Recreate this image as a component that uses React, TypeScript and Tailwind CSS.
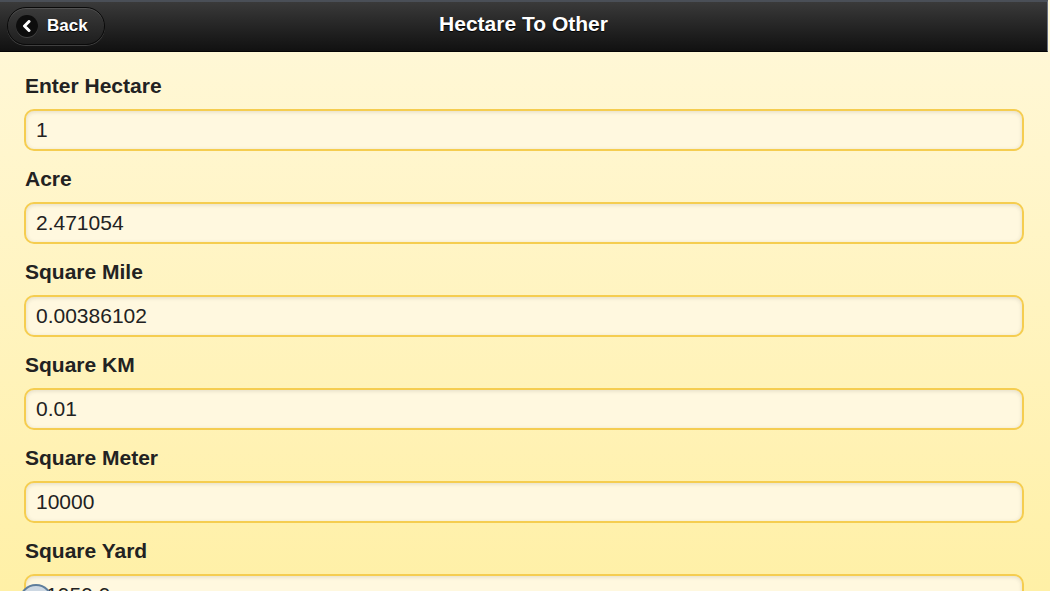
import React from "react";

const fields = [
  { label: "Enter Hectare", value: "1" },
  { label: "Acre", value: "2.471054" },
  { label: "Square Mile", value: "0.00386102" },
  { label: "Square KM", value: "0.01" },
  { label: "Square Meter", value: "10000" },
  { label: "Square Yard", value: "11959.9" },
];

function Field({ label, value }: { label: string; value: string }) {
  return (
    <div className="flex flex-col">
      <label className="h-[25px] pl-[1px] text-[21px] leading-[25px] font-bold text-[#222]">
        {label}
      </label>
      <div className="mt-[11px] mb-[15px] flex h-[42px] items-center rounded-[10px] border-2 border-[#f5cd50] bg-[#fff8df] px-[10px] text-[21px] text-[#222] shadow-[inset_0_1px_4px_rgba(0,0,0,0.12)]">
        {value}
      </div>
    </div>
  );
}

export default function App() {
  return (
    <div
      className="relative h-[591px] w-[1050px] overflow-hidden bg-gradient-to-b from-[#fff8da] to-[#fff0a6]"
      style={{ fontFamily: '"Liberation Sans", Arial, sans-serif' }}
    >
      {/* Header */}
      <header className="relative flex h-[52px] w-[1048px] items-center justify-center border-t-[2px] border-b-[1px] border-r-[1px] border-t-[#4a4f57] border-b-[#050505] border-r-[#6b7280] bg-gradient-to-b from-[#3a3a3a] to-[#111111] pb-[5px]">
        <button className="absolute left-[7px] top-[5px] flex h-[38px] w-[98px] items-center gap-[9px] rounded-full border border-[#0a0a0a] bg-gradient-to-b from-[#3b3b3b] to-[#1e1e1e] pl-[8px] shadow-[0_1px_0_rgba(255,255,255,0.18),inset_0_1px_0_rgba(255,255,255,0.12)]">
          <span className="flex h-[22px] w-[22px] items-center justify-center rounded-full bg-[#0d0d0d] shadow-[0_1px_0_rgba(255,255,255,0.15)]">
            <svg width="12" height="12" viewBox="0 0 12 12">
              <path d="M8 1.5 L3.5 6 L8 10.5" fill="none" stroke="#fff" strokeWidth="3" strokeLinecap="round" strokeLinejoin="round" />
            </svg>
          </span>
          <span className="text-[17px] font-bold text-white [text-shadow:0_1px_1px_#000]">Back</span>
        </button>
        <h1 className="text-[21px] font-bold text-white [text-shadow:0_1px_1px_#000]">Hectare To Other</h1>
      </header>

      {/* Main */}
      <main className="w-[1048px] px-[24px] pt-[21px]">
        {fields.map((f) => (
          <Field key={f.label} label={f.label} value={f.value} />
        ))}
      </main>

      {/* Overlay circle at bottom-left */}
      <div className="absolute left-[19px] top-[584px] h-[34px] w-[34px] rounded-full border-2 border-[#5f7e9c] bg-[#cdd8e3]" />
    </div>
  );
}
